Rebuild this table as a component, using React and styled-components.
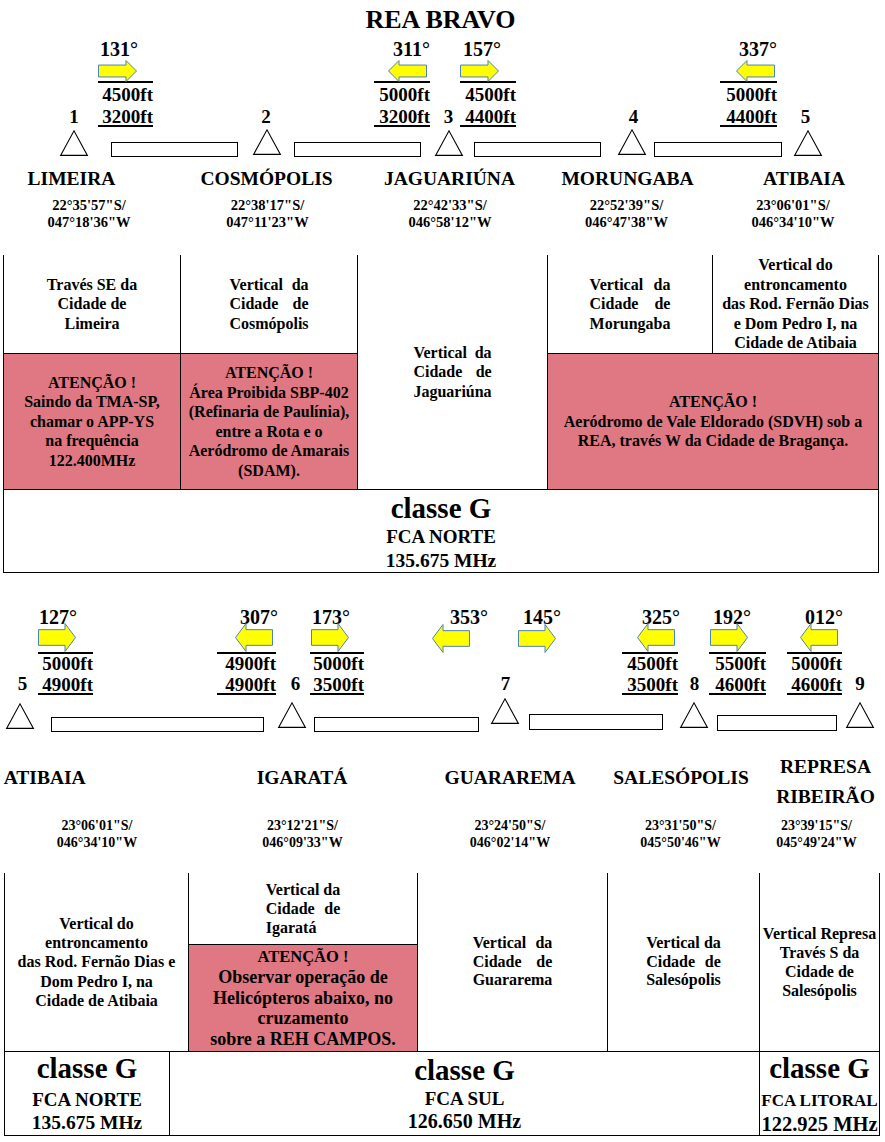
import React from 'react';
import styled, { createGlobalStyle } from 'styled-components';

const GlobalStyle = createGlobalStyle`
  html, body { margin: 0; padding: 0; background: #fff; }
  body {
    font-family: "Liberation Serif", "Times New Roman", serif;
    font-weight: 700;
    color: #000;
  }
  * { box-sizing: border-box; }
`;

const PINK = '#DF7882';

const Page = styled.div`
  width: 885px;
  height: 1142px;
  overflow: hidden;
`;

const Title = styled.h1`
  margin: 0;
  padding: 5px 4px 0 0;
  height: 35px;
  font-size: 26px;
  line-height: 30px;
  font-weight: 700;
  text-align: center;
`;

/* ---------- route diagram (free canvas) ---------- */

const Canvas = styled.div`
  position: relative;
  height: ${(p) => p.$h}px;
`;

const Heading = styled.div`
  position: absolute;
  left: ${(p) => p.$x}px;
  top: ${(p) => p.$y}px;
  font-size: 20px;
  line-height: 20px;
  white-space: nowrap;
`;

const ArrowSvg = styled.svg`
  position: absolute;
  left: ${(p) => p.$x}px;
  top: ${(p) => p.$y}px;
  overflow: visible;
  transform: ${(p) => (p.$dir === 'l' ? 'scaleX(-1)' : 'none')};
`;

function Arrow({ x, y, w, h, dir }) {
  const hl = Math.round(w * 0.28);
  const bt = h * 0.23;
  const bb = h * 0.77;
  const d = `M0.5 ${bt} H${w - hl} V0.5 L${w - 0.5} ${h / 2} L${w - hl} ${h - 0.5} V${bb} H0.5 Z`;
  return (
    <ArrowSvg $x={x} $y={y} $dir={dir} width={w} height={h} viewBox={`0 0 ${w} ${h}`}>
      <path d={d} fill="#FFFF00" stroke="#4F81BD" strokeWidth="1" />
    </ArrowSvg>
  );
}

const AltBlock = styled.div`
  position: absolute;
  left: ${(p) => p.$x}px;
  top: ${(p) => p.$y}px;
  width: ${(p) => p.$w}px;
  border-top: 2px solid #000;
  text-align: right;
  font-size: 19px;
  white-space: nowrap;
`;

const AltUpper = styled.div`
  line-height: ${(p) => p.$lh}px;
`;

const AltLower = styled.div`
  line-height: ${(p) => p.$lh}px;
  margin-top: ${(p) => p.$gap}px;
  border-bottom: 2px solid #000;
`;

const TriSvg = styled.svg`
  position: absolute;
  left: ${(p) => p.$x}px;
  top: ${(p) => p.$y}px;
  overflow: visible;
`;

function Triangle({ x, y }) {
  return (
    <TriSvg $x={x} $y={y} width="28" height="26" viewBox="0 0 28 26">
      <polygon points="0.6,25.4 14,0.8 27.4,25.4" fill="#fff" stroke="#000" strokeWidth="1.1" />
    </TriSvg>
  );
}

const Bar = styled.div`
  position: absolute;
  left: ${(p) => p.$x}px;
  top: ${(p) => p.$y}px;
  width: ${(p) => p.$w}px;
  height: ${(p) => p.$h}px;
  border: 1px solid #000;
  background: #fff;
`;

const CenterLabel = styled.div`
  position: absolute;
  left: ${(p) => p.$x}px;
  top: ${(p) => p.$y}px;
  transform: translateX(-50%);
  text-align: center;
  white-space: nowrap;
  font-size: ${(p) => p.$fs}px;
  line-height: ${(p) => p.$lh}px;
`;

function RouteDiagram({ cfg }) {
  const o = cfg.origin;
  return (
    <Canvas $h={cfg.height}>
      {cfg.alts.map((a, i) => (
        <AltBlock key={`al${i}`} $x={a.x} $y={cfg.altTop - o} $w={a.w}>
          <AltUpper $lh={cfg.altL1}>{a.a}</AltUpper>
          <AltLower $lh={cfg.altL2} $gap={cfg.altGap}>{a.b}</AltLower>
        </AltBlock>
      ))}
      {cfg.headings.map((h, i) => (
        <Heading key={`h${i}`} $x={h.x} $y={cfg.headingTop - o}>{h.t}</Heading>
      ))}
      {cfg.arrows.map((a, i) => (
        <Arrow key={`a${i}`} x={a.x} y={(a.y ?? cfg.arrowTop) - o} w={cfg.arrowW} h={cfg.arrowH} dir={a.d} />
      ))}
      {cfg.nums.map((n, i) => (
        <CenterLabel key={`n${i}`} $x={n.x} $y={cfg.numTop - o} $fs={19} $lh={20}>{n.t}</CenterLabel>
      ))}
      {cfg.bars.map((b, i) => (
        <Bar key={`b${i}`} $x={b.x} $y={b.y - o} $w={b.w} $h={b.h} />
      ))}
      {cfg.tris.map((t, i) => (
        <Triangle key={`t${i}`} x={t.x} y={t.y - o} />
      ))}
      {cfg.towns.map((t, i) => {
        const lh = t.lh || 20;
        const cy = t.cy ?? cfg.townCy;
        const top = cy - (t.lines.length * lh) / 2 - o;
        return (
          <CenterLabel key={`tw${i}`} $x={t.x} $y={top} $fs={19.5} $lh={lh}>
            {t.lines.map((l, j) => (
              <div key={j}>{l}</div>
            ))}
          </CenterLabel>
        );
      })}
      {cfg.coords.map((c, i) => (
        <CenterLabel key={`c${i}`} $x={c.x} $y={cfg.coordTop - o} $fs={cfg.coordFs} $lh={cfg.coordLh}>
          <div>{c.a}</div>
          <div>{c.b}</div>
        </CenterLabel>
      ))}
    </Canvas>
  );
}

const ROUTE1 = {
  origin: 35,
  height: 220,
  headingTop: 38.5,
  arrowTop: 60,
  arrowW: 39,
  arrowH: 22,
  altTop: 81,
  altL1: 23,
  altGap: 3,
  altL2: 16,
  numTop: 107,
  headings: [
    { t: '131°', x: 100 },
    { t: '311°', x: 393 },
    { t: '157°', x: 463 },
    { t: '337°', x: 739 },
  ],
  arrows: [
    { x: 98, d: 'r' },
    { x: 388, d: 'l' },
    { x: 460, d: 'r' },
    { x: 736, d: 'l' },
  ],
  alts: [
    { x: 98, w: 55, a: '4500ft', b: '3200ft' },
    { x: 374, w: 56, a: '5000ft', b: '3200ft' },
    { x: 460, w: 56, a: '4500ft', b: '4400ft' },
    { x: 720, w: 57, a: '5000ft', b: '4400ft' },
  ],
  nums: [
    { t: '1', x: 74 },
    { t: '2', x: 266 },
    { t: '3', x: 448.5 },
    { t: '4', x: 633.5 },
    { t: '5', x: 805.5 },
  ],
  tris: [
    { x: 60, y: 130 },
    { x: 253, y: 129 },
    { x: 435, y: 130 },
    { x: 618, y: 129 },
    { x: 794, y: 130 },
  ],
  bars: [
    { x: 111, y: 142, w: 127, h: 15 },
    { x: 294, y: 142, w: 127, h: 15 },
    { x: 474, y: 142, w: 127, h: 15 },
    { x: 654, y: 142, w: 128, h: 15 },
  ],
  townCy: 178.5,
  towns: [
    { lines: ['LIMEIRA'], x: 71.5 },
    { lines: ['COSMÓPOLIS'], x: 266.5 },
    { lines: ['JAGUARIÚNA'], x: 449.5 },
    { lines: ['MORUNGABA'], x: 627.5 },
    { lines: ['ATIBAIA'], x: 804 },
  ],
  coordTop: 196.75,
  coordFs: 14.5,
  coordLh: 17.5,
  coords: [
    { x: 89, a: `22°35'57"S/`, b: `047°18'36"W` },
    { x: 267.5, a: `22°38'17"S/`, b: `047°11'23"W` },
    { x: 450, a: `22°42'33"S/`, b: `046°58'12"W` },
    { x: 626.5, a: `22°52'39"S/`, b: `046°47'38"W` },
    { x: 793, a: `23°06'01"S/`, b: `046°34'10"W` },
  ],
};

const ROUTE2 = {
  origin: 573,
  height: 300,
  headingTop: 606.5,
  arrowTop: 623,
  arrowW: 38,
  arrowH: 29,
  altTop: 652,
  altL1: 19,
  altGap: 3,
  altL2: 17,
  numTop: 674,
  headings: [
    { t: '127°', x: 39 },
    { t: '307°', x: 240 },
    { t: '173°', x: 312 },
    { t: '353°', x: 450 },
    { t: '145°', x: 523 },
    { t: '325°', x: 642 },
    { t: '192°', x: 713 },
    { t: '012°', x: 805 },
  ],
  arrows: [
    { x: 38, d: 'r' },
    { x: 235, d: 'l' },
    { x: 311, d: 'r' },
    { x: 432, d: 'l', y: 624 },
    { x: 518, d: 'r', y: 624 },
    { x: 637, d: 'l' },
    { x: 710, d: 'r' },
    { x: 800, d: 'l' },
  ],
  alts: [
    { x: 38, w: 55, a: '5000ft', b: '4900ft' },
    { x: 217, w: 59, a: '4900ft', b: '4900ft' },
    { x: 310, w: 54, a: '5000ft', b: '3500ft' },
    { x: 622, w: 56, a: '4500ft', b: '3500ft' },
    { x: 709, w: 57, a: '5500ft', b: '4600ft' },
    { x: 787, w: 55, a: '5000ft', b: '4600ft' },
  ],
  nums: [
    { t: '5', x: 22.5 },
    { t: '6', x: 295.5 },
    { t: '7', x: 505.5 },
    { t: '8', x: 694.5 },
    { t: '9', x: 860 },
  ],
  tris: [
    { x: 6, y: 703 },
    { x: 278, y: 702 },
    { x: 491, y: 698 },
    { x: 680, y: 702 },
    { x: 846, y: 702 },
  ],
  bars: [
    { x: 51, y: 717, w: 213, h: 15 },
    { x: 314, y: 717, w: 165, h: 15 },
    { x: 529, y: 714, w: 134, h: 16 },
    { x: 717, y: 715, w: 120, h: 16 },
  ],
  townCy: 778,
  towns: [
    { lines: ['ATIBAIA'], x: 44.7 },
    { lines: ['IGARATÁ'], x: 302 },
    { lines: ['GUARAREMA'], x: 510 },
    { lines: ['SALESÓPOLIS'], x: 681 },
    { lines: ['REPRESA', 'RIBEIRÃO'], x: 825.5, lh: 30, cy: 782 },
  ],
  coordTop: 816.5,
  coordFs: 14,
  coordLh: 17,
  coords: [
    { x: 97, a: `23°06'01"S/`, b: `046°34'10"W` },
    { x: 302.5, a: `23°12'21"S/`, b: `046°09'33"W` },
    { x: 510, a: `23°24'50"S/`, b: `046°02'14"W` },
    { x: 680.5, a: `23°31'50"S/`, b: `045°50'46"W` },
    { x: 816.5, a: `23°39'15"S/`, b: `045°49'24"W` },
  ],
};

/* ---------- tables ---------- */

const Table = styled.div`
  display: grid;
  width: 876px;
  margin-left: ${(p) => p.$ml}px;
  border-left: 1px solid #000;
  grid-template-columns: ${(p) => p.$cols};
  grid-template-rows: ${(p) => p.$rows};
`;

const Cell = styled.div`
  grid-column: ${(p) => p.$col};
  grid-row: ${(p) => p.$row};
  border-right: 1px solid #000;
  border-bottom: 1px solid #000;
  background: ${(p) => (p.$pink ? PINK : '#fff')};
  display: flex;
  flex-direction: column;
  align-items: center;
  justify-content: center;
  text-align: center;
  font-size: ${(p) => p.$fs || 16}px;
  line-height: ${(p) => p.$lh || 19.5}px;
  white-space: nowrap;
  min-width: 0;
`;

const Line = styled.div`
  font-size: ${(p) => (p.$fs ? `${p.$fs}px` : 'inherit')};
`;

const JBlock = styled.div`
  display: inline-flex;
  flex-direction: column;
  text-align: left;
`;

const JLine = styled.div`
  display: flex;
  gap: 0.25em;
  justify-content: ${(p) => (p.$last ? 'flex-start' : 'space-between')};
`;

function Justified({ lines }) {
  return (
    <JBlock>
      {lines.map((l, i) => (
        <JLine key={i} $last={i === lines.length - 1}>
          {l.split(' ').map((w, j) => (
            <span key={j}>{w}</span>
          ))}
        </JLine>
      ))}
    </JBlock>
  );
}

function Lines({ lines, first }) {
  return lines.map((l, i) => (
    <Line key={i} $fs={i === 0 ? first : undefined}>
      {l}
    </Line>
  ));
}

const ClassCell = styled(Cell)`
  justify-content: flex-start;
  padding-top: ${(p) => p.$pt}px;
`;

const ClassBig = styled.div`
  font-size: 29px;
  line-height: ${(p) => p.$lh}px;
`;

const ClassSub = styled.div`
  font-size: ${(p) => p.$fs}px;
  line-height: ${(p) => p.$lh}px;
`;

function ClassG({ col, row, pt, big, sub, freq, subText, freqText }) {
  return (
    <ClassCell $col={col} $row={row} $pt={pt}>
      <ClassBig $lh={big}>classe G</ClassBig>
      <ClassSub $fs={sub[0]} $lh={sub[1]}>{subText}</ClassSub>
      <ClassSub $fs={freq[0]} $lh={freq[1]}>{freqText}</ClassSub>
    </ClassCell>
  );
}

export default function App() {
  return (
    <Page>
      <GlobalStyle />
      <Title>REA BRAVO</Title>
      <RouteDiagram cfg={ROUTE1} />

      <Table $ml={3} $cols="177px 177px 190px 165px 166px" $rows="99px 136px 83px">
        <Cell $col="1" $row="1">
          <Lines lines={['Través SE da', 'Cidade de', 'Limeira']} />
        </Cell>
        <Cell $col="2" $row="1">
          <Justified lines={['Vertical da', 'Cidade de', 'Cosmópolis']} />
        </Cell>
        <Cell $col="3" $row="1 / span 2">
          <Justified lines={['Vertical da', 'Cidade de', 'Jaguariúna']} />
        </Cell>
        <Cell $col="4" $row="1">
          <Justified lines={['Vertical da', 'Cidade de', 'Morungaba']} />
        </Cell>
        <Cell $col="5" $row="1">
          <Lines
            lines={['Vertical do', 'entroncamento', 'das Rod. Fernão Dias', 'e Dom Pedro I, na', 'Cidade de Atibaia']}
          />
        </Cell>
        <Cell $col="1" $row="2" $pink>
          <Lines lines={['ATENÇÃO !', 'Saindo da TMA-SP,', 'chamar o APP-YS', 'na frequência', '122.400MHz']} />
        </Cell>
        <Cell $col="2" $row="2" $pink>
          <Lines
            lines={[
              'ATENÇÃO !',
              'Área Proibida SBP-402',
              '(Refinaria de Paulínia),',
              'entre a Rota e o',
              'Aeródromo de Amarais',
              '(SDAM).',
            ]}
          />
        </Cell>
        <Cell $col="4 / span 2" $row="2" $pink>
          <Lines
            lines={['ATENÇÃO !', 'Aeródromo de Vale Eldorado (SDVH) sob a', 'REA, través W da Cidade de Bragança.']}
          />
        </Cell>
        <ClassG
          col="1 / -1"
          row="3"
          pt={2}
          big={32}
          sub={[19, 25]}
          freq={[19.5, 23]}
          subText="FCA NORTE"
          freqText="135.675 MHz"
        />
      </Table>

      <RouteDiagram cfg={ROUTE2} />

      <Table $ml={4} $cols="184px 229px 190px 152px 120px" $rows="72px 107px">
        <Cell $col="1" $row="1 / span 2" $lh={19.25}>
          <Lines
            lines={['Vertical do', 'entroncamento', 'das Rod. Fernão Dias e', 'Dom Pedro I, na', 'Cidade de Atibaia']}
          />
        </Cell>
        <Cell $col="2" $row="1" $lh={19}>
          <Justified lines={['Vertical da', 'Cidade de', 'Igaratá']} />
        </Cell>
        <Cell $col="2" $row="2" $pink $fs={18} $lh={20.5}>
          <Lines
            first={16.5}
            lines={['ATENÇÃO !', 'Observar operação de', 'Helicópteros abaixo, no', 'cruzamento', 'sobre a REH CAMPOS.']}
          />
        </Cell>
        <Cell $col="3" $row="1 / span 2" $lh={18.5}>
          <Justified lines={['Vertical da', 'Cidade de', 'Guararema']} />
        </Cell>
        <Cell $col="4" $row="1 / span 2" $lh={18.5}>
          <Justified lines={['Vertical da', 'Cidade de', 'Salesópolis']} />
        </Cell>
        <Cell $col="5" $row="1 / span 2" $lh={19}>
          <Lines lines={['Vertical Represa', 'Través S da', 'Cidade de', 'Salesópolis']} />
        </Cell>
      </Table>

      <Table $ml={4} $cols="165px 590px 120px" $rows="84px">
        <ClassG
          col="1"
          row="1"
          pt={1}
          big={31}
          sub={[19, 31]}
          freq={[19.5, 16]}
          subText="FCA NORTE"
          freqText="135.675 MHz"
        />
        <ClassG
          col="2"
          row="1"
          pt={3}
          big={31}
          sub={[19, 25]}
          freq={[20, 21]}
          subText="FCA SUL"
          freqText="126.650 MHz"
        />
        <ClassG
          col="3"
          row="1"
          pt={1}
          big={31}
          sub={[17, 34]}
          freq={[20.5, 12]}
          subText="FCA LITORAL"
          freqText="122.925 MHz"
        />
      </Table>
    </Page>
  );
}
